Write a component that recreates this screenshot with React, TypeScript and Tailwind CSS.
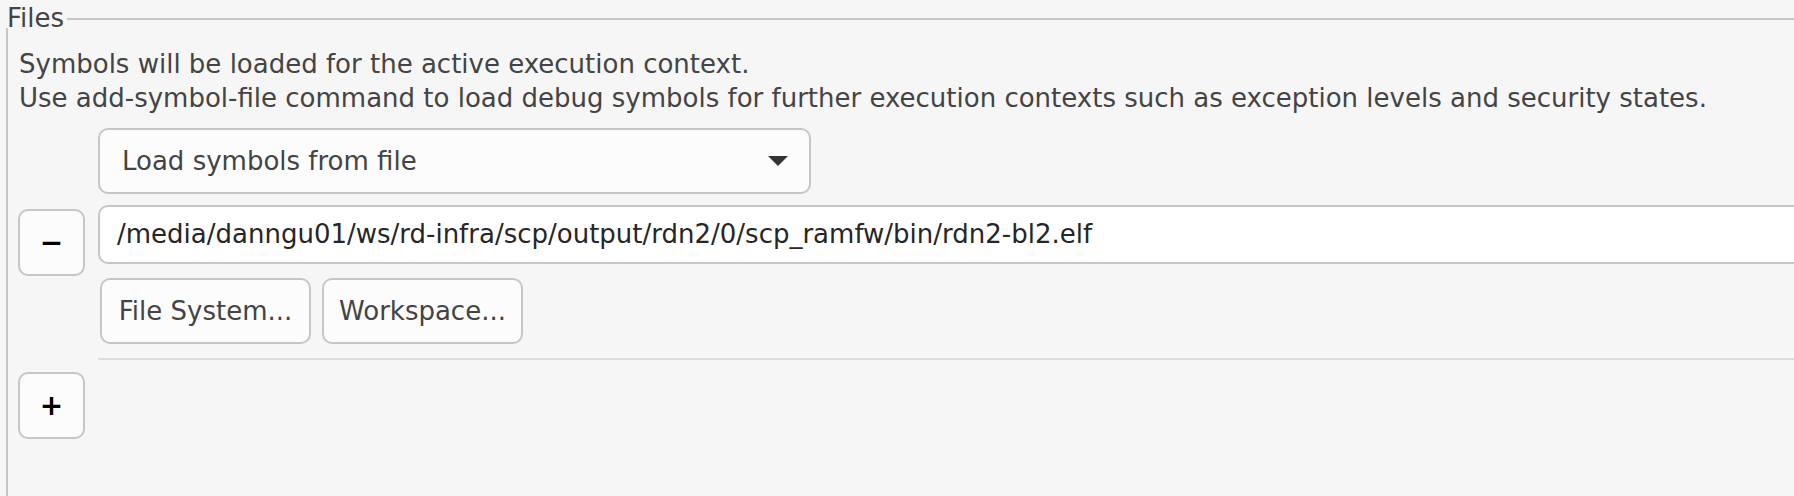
import React from 'react';

function SquareButton({ label }: { label: string }) {
  return (
    <button className="flex h-[67px] w-[67px] items-center justify-center rounded-[10px] border-2 border-[#c6c6c6] bg-[#fcfcfc] text-[28px] font-bold leading-none text-black">
      {label}
    </button>
  );
}

function PushButton({ label, width }: { label: string; width: string }) {
  return (
    <button
      className={`flex h-[66px] ${width} items-center justify-center rounded-[10px] border-2 border-[#c6c6c6] bg-[#fcfcfc] text-[#444]`}
    >
      {label}
    </button>
  );
}

export default function App() {
  return (
    <div className="h-[496px] w-[1794px] overflow-hidden bg-[#f6f6f6] font-['DejaVu_Sans',sans-serif] text-[26px] text-[#444]">
      {/* group title */}
      <div className="flex h-[28px] items-start pl-[7px]">
        <span className="mt-[3px] leading-[30px]">Files</span>
        <div className="ml-[3px] mt-[18px] h-[2px] flex-1 bg-[#c6c6c6]" />
      </div>

      <div className="ml-[6px] h-[468px] border-l-2 border-[#c6c6c6] pl-[10px] pt-[19px]">
        <div className="pl-[1px] leading-[34px]">
          <p>Symbols will be loaded for the active execution context.</p>
          <p>
            Use add-symbol-file command to load debug symbols for further execution contexts such as
            exception levels and security states.
          </p>
        </div>

        <div className="mt-[13px] flex gap-[13px]">
          <div className="w-[67px] shrink-0 pt-[81px]">
            <SquareButton label="−" />
          </div>
          <div className="flex-1">
            <div className="flex h-[66px] w-[713px] items-center justify-between rounded-[10px] border-2 border-[#c6c6c6] bg-[#fcfcfc] pl-[22px] pr-[21px]">
              <span>Load symbols from file</span>
              <svg width="20" height="10" viewBox="0 0 20 10">
                <polygon points="0,0 20,0 10,10" fill="#333" />
              </svg>
            </div>
            <div className="mt-[11px] flex h-[59px] items-center rounded-l-[10px] border-2 border-r-0 border-[#c6c6c6] bg-white pl-[17px] text-[#262626]">
              /media/danngu01/ws/rd-infra/scp/output/rdn2/0/scp_ramfw/bin/rdn2-bl2.elf
            </div>
            <div className="mt-[14px] flex gap-[11px] pl-[2px]">
              <PushButton label="File System..." width="w-[211px]" />
              <PushButton label="Workspace..." width="w-[201px]" />
            </div>
            <div className="mt-[14px] h-[2px] bg-[#dedede]" />
          </div>
        </div>

        <div className="mt-[12px] w-[67px]">
          <SquareButton label="+" />
        </div>
      </div>
    </div>
  );
}
